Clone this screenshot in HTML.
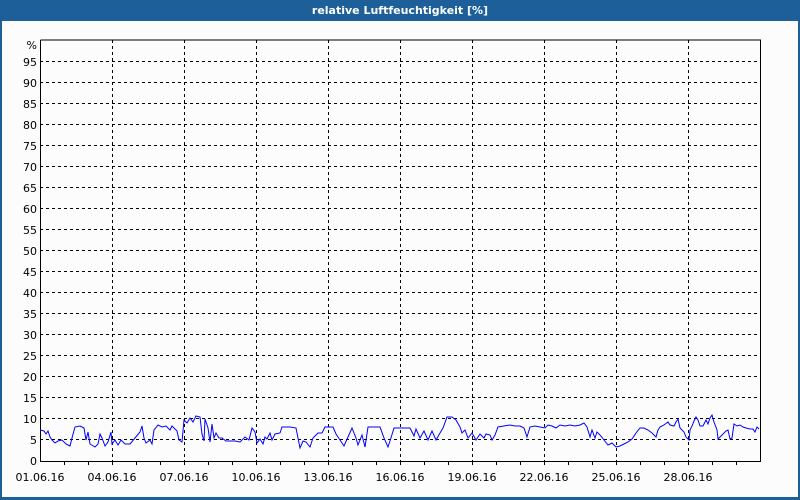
<!DOCTYPE html>
<html><head><meta charset="utf-8"><style>
html,body{margin:0;padding:0;width:800px;height:500px;overflow:hidden;background:#fff}
svg{display:block;font-family:"DejaVu Sans","Liberation Sans",sans-serif}
</style></head><body>
<svg width="800" height="500" viewBox="0 0 800 500">
<rect x="0" y="0" width="800" height="500" fill="#1d5f98"/>
<rect x="2" y="21" width="796" height="476" fill="#fcfcfc"/>
<text x="400" y="14" fill="#fff" font-size="11" font-weight="bold" text-anchor="middle">relative Luftfeuchtigkeit [%]</text>
<g stroke="#000" stroke-width="1" stroke-dasharray="3,3" fill="none">
<path d="M40 61.5H760M40 82.5H760M40 103.5H760M40 124.5H760M40 145.5H760M40 166.5H760M40 187.5H760M40 208.5H760M40 229.5H760M40 250.5H760M40 271.5H760M40 292.5H760M40 313.5H760M40 334.5H760M40 355.5H760M40 376.5H760M40 397.5H760M40 418.5H760M40 439.5H760"/>
<path d="M112.5 40V461M184.5 40V461M256.5 40V461M328.5 40V461M400.5 40V461M472.5 40V461M544.5 40V461M616.5 40V461M688.5 40V461"/>
</g>
<g stroke="#000" stroke-width="1" fill="none">
<path d="M40.5 40V461.5H760.5V40H40.5"/>
<path d="M64.5 461v4M88.5 461v4M112.5 461v4M136.5 461v4M160.5 461v4M184.5 461v4M208.5 461v4M232.5 461v4M256.5 461v4M280.5 461v4M304.5 461v4M328.5 461v4M352.5 461v4M376.5 461v4M400.5 461v4M424.5 461v4M448.5 461v4M472.5 461v4M496.5 461v4M520.5 461v4M544.5 461v4M568.5 461v4M592.5 461v4M616.5 461v4M640.5 461v4M664.5 461v4M688.5 461v4M712.5 461v4M736.5 461v4"/>
</g>
<g font-size="11" fill="#000" text-anchor="end">
<text x="37" y="49">%</text>
<text x="37" y="66">95</text><text x="37" y="87">90</text><text x="37" y="108">85</text><text x="37" y="129">80</text><text x="37" y="150">75</text><text x="37" y="171">70</text><text x="37" y="192">65</text><text x="37" y="213">60</text><text x="37" y="234">55</text><text x="37" y="255">50</text><text x="37" y="276">45</text><text x="37" y="297">40</text><text x="37" y="318">35</text><text x="37" y="339">30</text><text x="37" y="360">25</text><text x="37" y="381">20</text><text x="37" y="402">15</text><text x="37" y="423">10</text><text x="37" y="444">5</text><text x="37" y="465">0</text>
</g>
<g font-size="11" fill="#000" text-anchor="middle">
<text x="40" y="481">01.06.16</text><text x="112" y="481">04.06.16</text><text x="184" y="481">07.06.16</text><text x="256" y="481">10.06.16</text><text x="328" y="481">13.06.16</text><text x="400" y="481">16.06.16</text><text x="472" y="481">19.06.16</text><text x="544" y="481">22.06.16</text><text x="616" y="481">25.06.16</text><text x="688" y="481">28.06.16</text>
</g>
<polyline fill="none" stroke="#0000ff" stroke-width="1" points="40,430 44,431 46,434 48,431 50,437 52,440 55,443 58,441 62,440 66,444 70,446 72,438 75,427 80,426 84,428 86,440 88,432 90,444 95,447 98,444 100,434 102,438 105,446 108,442 111,432 112,444 115,440 118,445 121,440 125,444 130,444 135,438 140,432 142,426 144,438 146,443 150,440 152,444 154,430 158,425 162,427 166,426 170,430 172,426 177,431 179,440 182,442 184,420 187,423 190,418 193,422 196,416 200,417 202,434 204,441 205,419 208,428 210,442 212,424 214,438 216,433 219,438 222,438 226,441 230,441 235,441 240,442 245,437 249,440 252,428 255,432 257,443 260,439 263,444 265,437 267,439 270,433 272,440 275,434 280,433 282,427 290,427 296,428 300,448 303,441 306,442 310,447 313,438 318,433 322,433 325,427 333,427 336,434 340,440 344,446 348,437 352,428 356,438 358,445 362,435 365,447 368,427 380,427 384,438 388,447 390,441 394,428 405,428 410,428 414,436 416,429 420,438 424,431 428,440 432,431 436,440 440,433 443,428 447,417 452,417 456,420 460,427 462,433 465,430 468,438 472,433 476,440 480,434 484,438 486,434 490,435 492,440 495,435 498,427 510,425 515,426 520,426 524,428 527,437 530,427 535,426 540,427 545,428 548,425 552,426 556,428 560,425 565,426 570,425 575,426 580,425 584,423 587,427 590,437 592,430 595,438 597,432 600,435 604,440 608,445 612,443 616,447 620,446 624,444 628,442 632,439 636,433 640,428 644,428 648,430 652,433 656,437 658,430 660,427 664,425 668,422 670,425 674,426 676,422 678,419 680,428 684,432 686,437 689,440 690,430 692,426 694,421 696,417 698,420 700,426 703,426 706,420 708,424 710,418 712,415 714,422 717,430 718,439 722,435 726,431 728,430 730,439 732,438 734,424 737,426 740,425 743,427 746,428 750,429 753,429 755,432 757,427 759,429"/>
</svg>
</body></html>
